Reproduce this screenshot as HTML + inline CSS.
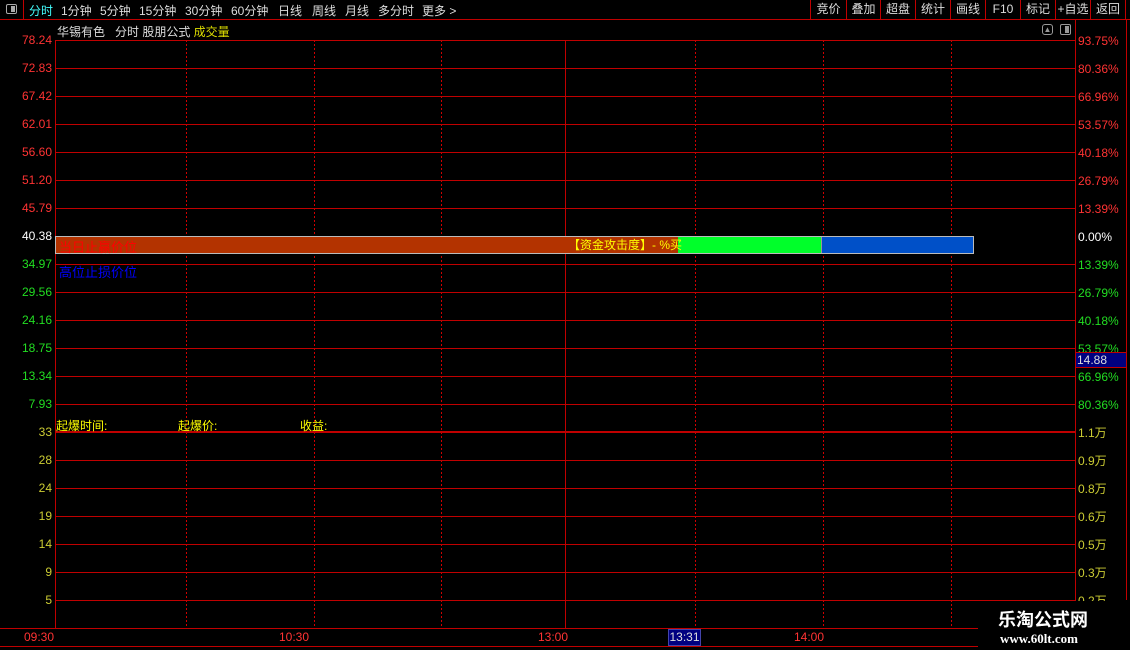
<!DOCTYPE html>
<html><head><meta charset="utf-8"><style>
*{margin:0;padding:0;box-sizing:border-box}
body{width:1130px;height:650px;background:#000;position:relative;overflow:hidden;font-family:"Liberation Sans","Noto Sans CJK SC",sans-serif;font-size:12px}
.a{position:absolute;white-space:nowrap}
.m{position:absolute;top:2px;color:#ddd;font-size:12px;white-space:nowrap}
.h{position:absolute;left:55px;width:1020px;height:1px;background:#c00000}
.l{position:absolute;right:1078px;font-size:12px;line-height:14px}
.r{position:absolute;left:1078px;font-size:12px;line-height:14px}
.tb{position:absolute;top:0;height:19px;line-height:18px;color:#ddd;font-size:12px;border-left:1px solid #c00000;text-align:center}
</style></head><body>
<div class="a" style="left:0;top:19px;width:1130px;height:1px;background:#c00000"></div>
<div class="a" style="left:0;top:0;width:24px;height:19px;border-right:1px solid #c00000"></div>
<div class="a" style="left:6px;top:4px;width:11px;height:10px;border:1px solid #aaa;border-radius:2px"><div style="position:absolute;right:1px;top:1px;width:4px;height:6px;background:#aaa"></div></div>
<div class="m" style="left:29px;color:#4ff">分时</div>
<div class="m" style="left:61px">1分钟</div>
<div class="m" style="left:100px">5分钟</div>
<div class="m" style="left:139px">15分钟</div>
<div class="m" style="left:185px">30分钟</div>
<div class="m" style="left:231px">60分钟</div>
<div class="m" style="left:278px">日线</div>
<div class="m" style="left:312px">周线</div>
<div class="m" style="left:345px">月线</div>
<div class="m" style="left:378px">多分时</div>
<div class="m" style="left:422px">更多 &gt;</div>
<div class="tb" style="left:810px;width:36px">竞价</div>
<div class="tb" style="left:846px;width:34px">叠加</div>
<div class="tb" style="left:880px;width:35px">超盘</div>
<div class="tb" style="left:915px;width:35px">统计</div>
<div class="tb" style="left:950px;width:35px">画线</div>
<div class="tb" style="left:985px;width:35px">F10</div>
<div class="tb" style="left:1020px;width:35px">标记</div>
<div class="tb" style="left:1055px;width:35px">+自选</div>
<div class="tb" style="left:1090px;width:36px;border-right:1px solid #c00000">返回</div>
<div class="a" style="left:57px;top:23px;color:#ddd">华锡有色&nbsp;&nbsp; 分时 股朋公式 <span style="color:#dd0">成交量</span></div>
<div class="a" style="left:1042px;top:24px;width:11px;height:11px;border:1px solid #999;border-radius:3px;color:#999;font-size:8px;line-height:9px;text-align:center">▲</div>
<div class="a" style="left:1060px;top:24px;width:11px;height:11px;border:1px solid #999;border-radius:2px"><div style="position:absolute;right:1px;top:1px;width:4px;height:7px;background:#999"></div></div>
<svg class="a" style="left:0;top:0" width="1130" height="650">
<g stroke="#d00000" stroke-width="1" stroke-dasharray="2,2" shape-rendering="crispEdges">
<line x1="186.5" y1="40" x2="186.5" y2="628"/><line x1="314.5" y1="40" x2="314.5" y2="628"/><line x1="441.5" y1="40" x2="441.5" y2="628"/>
<line x1="695.5" y1="40" x2="695.5" y2="628"/><line x1="823.5" y1="40" x2="823.5" y2="628"/><line x1="951.5" y1="40" x2="951.5" y2="628"/>
</g></svg>
<div class="a" style="left:55px;top:40px;width:1px;height:588px;background:#c00000"></div>
<div class="a" style="left:1075px;top:20px;width:1px;height:630px;background:#c00000"></div>
<div class="a" style="left:1126px;top:20px;width:1px;height:580px;background:#c00000"></div>
<div class="a" style="left:565px;top:40px;width:1px;height:588px;background:#c00000"></div>
<div class="h" style="top:40px"></div><div class="h" style="top:68px"></div><div class="h" style="top:96px"></div><div class="h" style="top:124px"></div><div class="h" style="top:152px"></div><div class="h" style="top:180px"></div><div class="h" style="top:208px"></div>
<div class="h" style="top:264px"></div><div class="h" style="top:292px"></div><div class="h" style="top:320px"></div><div class="h" style="top:348px"></div><div class="h" style="top:376px"></div><div class="h" style="top:404px"></div>
<div class="h" style="top:431px;height:2px"></div><div class="h" style="top:460px"></div><div class="h" style="top:488px"></div><div class="h" style="top:516px"></div><div class="h" style="top:544px"></div><div class="h" style="top:572px"></div><div class="h" style="top:600px"></div>
<div class="a" style="left:0;top:628px;width:1130px;height:1px;background:#c00000"></div>
<div class="a" style="left:0;top:646px;width:1130px;height:1px;background:#c00000"></div>
<div class="l" style="top:33px;color:#f33">78.24</div><div class="l" style="top:61px;color:#f33">72.83</div><div class="l" style="top:89px;color:#f33">67.42</div><div class="l" style="top:117px;color:#f33">62.01</div><div class="l" style="top:145px;color:#f33">56.60</div><div class="l" style="top:173px;color:#f33">51.20</div><div class="l" style="top:201px;color:#f33">45.79</div>
<div class="l" style="top:229px;color:#fff">40.38</div>
<div class="l" style="top:257px;color:#2d2">34.97</div><div class="l" style="top:285px;color:#2d2">29.56</div><div class="l" style="top:313px;color:#2d2">24.16</div><div class="l" style="top:341px;color:#2d2">18.75</div><div class="l" style="top:369px;color:#2d2">13.34</div><div class="l" style="top:397px;color:#2d2">7.93</div>
<div class="l" style="top:425px;color:#cc3">33</div><div class="l" style="top:453px;color:#cc3">28</div><div class="l" style="top:481px;color:#cc3">24</div><div class="l" style="top:509px;color:#cc3">19</div><div class="l" style="top:537px;color:#cc3">14</div><div class="l" style="top:565px;color:#cc3">9</div><div class="l" style="top:593px;color:#cc3">5</div>
<div class="r" style="top:34px;color:#f33">93.75%</div><div class="r" style="top:62px;color:#f33">80.36%</div><div class="r" style="top:90px;color:#f33">66.96%</div><div class="r" style="top:118px;color:#f33">53.57%</div><div class="r" style="top:146px;color:#f33">40.18%</div><div class="r" style="top:174px;color:#f33">26.79%</div><div class="r" style="top:202px;color:#f33">13.39%</div>
<div class="r" style="top:230px;color:#fff">0.00%</div>
<div class="r" style="top:258px;color:#2d2">13.39%</div><div class="r" style="top:286px;color:#2d2">26.79%</div><div class="r" style="top:314px;color:#2d2">40.18%</div><div class="r" style="top:342px;color:#2d2">53.57%</div><div class="r" style="top:370px;color:#2d2">66.96%</div><div class="r" style="top:398px;color:#2d2">80.36%</div>
<div class="r" style="top:426px;color:#cc3">1.1万</div><div class="r" style="top:454px;color:#cc3">0.9万</div><div class="r" style="top:482px;color:#cc3">0.8万</div><div class="r" style="top:510px;color:#cc3">0.6万</div><div class="r" style="top:538px;color:#cc3">0.5万</div><div class="r" style="top:566px;color:#cc3">0.3万</div><div class="r" style="top:594px;color:#cc3">0.2万</div>
<div class="a" style="left:1075px;top:352px;width:52px;height:16px;background:#000080;border:1px solid #c00000;color:#ddd;line-height:14px;padding-left:1px">14.88</div>
<div class="a" style="left:55px;top:236px;width:919px;height:18px;border:1px solid #bbb;background:#b33300"></div>
<div class="a" style="left:678px;top:237px;width:143px;height:16px;background:#00ff2a"></div>
<div class="a" style="left:821px;top:237px;width:152px;height:16px;background:#0050c8;border-left:1px solid #999"></div>
<div class="a" style="left:59px;top:237px;color:#f00;font-size:13px">当日止赢价位</div>
<div class="a" style="left:59px;top:262px;color:#00f;font-size:13px">高位止损价位</div>
<div class="a" style="left:568px;top:236px;color:#ff0;font-size:12px">【资金攻击度】- %买</div>
<div class="a" style="left:56px;top:417px;color:#ff0">起爆时间:</div>
<div class="a" style="left:178px;top:417px;color:#ff0">起爆价:</div>
<div class="a" style="left:300px;top:417px;color:#ff0">收益:</div>
<div class="a" style="left:24px;top:630px;color:#f33">09:30</div>
<div class="a" style="left:279px;top:630px;color:#f33">10:30</div>
<div class="a" style="left:538px;top:630px;color:#f33">13:00</div>
<div class="a" style="left:668px;top:629px;width:33px;height:17px;background:#000080;border:1px solid #44a;color:#ddd;text-align:center;line-height:15px">13:31</div>
<div class="a" style="left:794px;top:630px;color:#f33">14:00</div>
<div class="a" style="left:978px;top:601px;width:152px;height:49px;background:#000"></div>
<div class="a" style="left:998px;top:606px;color:#fff;font-size:18px;font-weight:bold;font-family:'Noto Sans CJK SC',sans-serif">乐淘公式网</div>
<div class="a" style="left:1000px;top:631px;color:#fff;font-size:13px;font-weight:bold;font-family:'Liberation Serif',serif">www.60lt.com</div>
</body></html>
